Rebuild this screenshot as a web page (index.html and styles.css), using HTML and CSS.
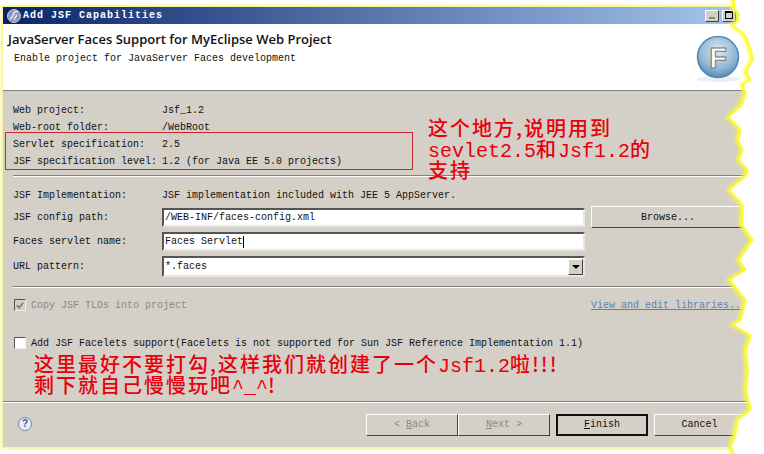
FILE: index.html
```html
<!DOCTYPE html>
<html lang="zh-CN">
<head>
    <meta charset="UTF-8">
    <title>Add JSF Capabilities</title>
    <link rel="stylesheet" href="styles.css">
</head>
<body>
    <div class="shot">
        <div class="window">
            <!-- Title bar -->
            <div class="titlebar">
                <svg class="app-icon" width="14" height="14" viewBox="0 0 14 14">
                    <circle cx="7" cy="7" r="6.5" fill="#8f97b8" stroke="#c3c8da"/>
                    <path d="M3 10C5 9 6 7 7 4C8 2 10 2 11 3M7 11C8 9 9 7 10 6" fill="none" stroke="#e8eaf4" stroke-width="1.4"/>
                </svg>
                <span class="title-text">Add JSF Capabilities</span>
                <span class="title-btn"><i class="min-mark"></i></span>
                <span class="title-btn"><i class="max-mark"></i></span>
            </div>

            <!-- Wizard header -->
            <div class="header">
                <div>
                    <h1>JavaServer Faces Support for MyEclipse Web Project</h1>
                    <p>Enable project for JavaServer Faces development</p>
                </div>
                <svg class="logo" width="48" height="50" viewBox="0 0 48 50">
                    <defs>
                        <radialGradient id="ball" cx="0.5" cy="0.35" r="0.7">
                            <stop offset="0" stop-color="#dce9f2"/>
                            <stop offset="0.65" stop-color="#8fb4d2"/>
                            <stop offset="1" stop-color="#3f7fae"/>
                        </radialGradient>
                    </defs>
                    <ellipse cx="24" cy="45" rx="22" ry="3" fill="#eceff4"/>
                    <circle cx="24" cy="23" r="20.5" fill="url(#ball)" stroke="#4f8ab5" stroke-width="1.5"/>
                    <text x="24" y="34" class="logo-f">F</text>
                </svg>
            </div>

            <!-- Project info -->
            <div class="content">
                <div class="info">
                    <span>Web project:</span><span>Jsf_1.2</span>
                    <span>Web-root folder:</span><span>/WebRoot</span>
                    <span>Servlet specification:</span><span>2.5</span>
                    <span>JSF specification level:</span><span>1.2 (for Java EE 5.0 projects)</span>
                </div>
                <hr class="sep sep-info">

                <div class="form">
                    <span class="impl-label">JSF Implementation:</span>
                    <span class="impl-value">JSF implementation included with JEE 5 AppServer.</span>

                    <span>JSF config path:</span>
                    <div class="field">/WEB-INF/faces-config.xml</div>
                    <div class="btn browse">Browse...</div>

                    <span>Faces servlet name:</span>
                    <div class="field">Faces Servlet<i class="caret"></i></div>
                    <span></span>

                    <span>URL pattern:</span>
                    <div class="field combo">*.faces<span class="arrow"><i></i></span></div>
                    <span></span>
                </div>
                <hr class="sep sep-form">

                <div class="tlds">
                    <span class="check disabled">
                        <svg width="11" height="11" viewBox="0 0 11 11"><path d="M2 5L4.5 8L9 2.5" fill="none" stroke="#808080" stroke-width="2"/></svg>
                    </span>
                    <span class="muted">Copy JSF TLDs into project</span>
                    <a class="link">View and edit libraries...</a>
                </div>

                <div class="facelets">
                    <span class="check"></span>
                    <span>Add JSF Facelets support(Facelets is not supported for Sun JSF Reference Implementation 1.1)</span>
                </div>
            </div>

            <!-- Wizard buttons -->
            <div class="footer">
                <span class="help">?</span>
                <div class="btn off"><span>&lt; <u>B</u>ack</span></div>
                <div class="btn off"><span><u>N</u>ext &gt;</span></div>
                <div class="btn default"><span><u>F</u>inish</span></div>
                <div class="btn">Cancel</div>
            </div>
        </div>

        <!-- Red notes drawn over the screenshot -->
        <div class="red-box"></div>
        <div class="note note-top">这个地方,说明用到<br><b>sevlet2.5</b>和<b>Jsf1.2</b>的<br>支持</div>
        <div class="note note-bottom">这里最好不要打勾,这样我们就创建了一个<b>Jsf1.2</b>啦!!!<br>剩下就自己慢慢玩吧<b>^_^</b>!</div>

        <!-- Torn right edge -->
        <svg class="torn" width="764" height="454" viewBox="0 0 764 454">
            <defs>
                <filter id="glow" x="-20%" y="-5%" width="140%" height="110%"><feGaussianBlur stdDeviation="1.5"/></filter>
            </defs>
            <path class="edge-glow" filter="url(#glow)" d="M733 0L733 8L738 14L737 22L732 25L740 31L745 36L750 50L752 60L745 72L750 80L742 85L745 93L741 105L728 117L740 130L737 140L742 150L738 160L747 170L745 176L738 182L729 190L742 205L741 225L752 240L738 260L745 270L729 280L745 300L740 320L733 325L750 335L745 350L747 370L745 390L750 410L737 420L735 432L730 447L733 454L764 454L764 0Z"/>
            <path class="edge-line" d="M735 0L735 8L740 14L739 22L734 25L742 31L747 36L752 50L754 60L747 72L752 80L744 85L747 93L743 105L730 117L742 130L739 140L744 150L740 160L749 170L747 176L740 182L731 190L744 205L743 225L754 240L740 260L747 270L731 280L747 300L742 320L735 325L752 335L747 350L749 370L747 390L752 410L739 420L737 432L732 447L735 454L764 454L764 0Z"/>
        </svg>
    </div>
</body>
</html>
```

FILE: styles.css
```css
html, body {
    margin: 0;
    background: #fff;
}

body {
    font-family: "Liberation Mono", "Noto Sans CJK SC", monospace;
    font-size: 10px;
    color: #111;
}

.shot {
    position: relative;
    width: 764px;
    height: 454px;
    overflow: hidden;
}

.window {
    display: flex;
    flex-direction: column;
    width: 750px;
    height: 440px;
    margin: 7px 0 0 3px;
    background: #d4d0c8;
    box-shadow: 0 0 2px 2px #f6f68c;
}

/* Title bar */
.titlebar {
    display: flex;
    align-items: center;
    height: 17px;
    padding-right: 17px;
    background: linear-gradient(to right, #0a246a, #a6caf0);
}

.app-icon {
    margin-left: 4px;
}

.title-text {
    flex: 1;
    margin-left: 2px;
    color: #fff;
    font-weight: bold;
    letter-spacing: 1px;
}

.title-btn {
    display: flex;
    align-items: flex-end;
    justify-content: center;
    box-sizing: border-box;
    width: 14px;
    height: 12px;
    margin-left: 3px;
    padding: 2px;
    background: #d4d0c8;
    border: 1px solid;
    border-color: #fff #404040 #404040 #fff;
}

.min-mark {
    width: 6px;
    height: 2px;
    background: #888;
}

.max-mark {
    box-sizing: border-box;
    width: 9px;
    height: 8px;
    border: 1px solid #000;
    border-top-width: 2px;
}

/* Wizard header */
.header {
    display: flex;
    justify-content: space-between;
    height: 66px;
    background: #fff;
    border-bottom: 1px solid #808080;
}

h1 {
    margin: 8px 0 0 5px;
    font-family: "Open Sans", sans-serif;
    font-size: 13px;
    line-height: 15px;
    font-weight: 600;
    letter-spacing: 0;
}

.header p {
    margin: 6px 0 0 11px;
    line-height: 12px;
}

.logo {
    margin: 10px 11px 0 0;
}

.logo-f {
    font-family: "Liberation Sans", sans-serif;
    font-size: 29px;
    font-weight: bold;
    text-anchor: middle;
    fill: #fff;
    stroke: #6d7378;
    stroke-width: 1;
}

/* Main content */
.content {
    flex: 1;
    padding: 11px 0 0 10px;
}

.info {
    display: grid;
    grid-template-columns: 149px 1fr;
    grid-auto-rows: 17px;
    align-items: center;
}

.sep {
    height: 0;
    margin: 0;
    border: 0;
    border-top: 1px solid #808080;
    border-bottom: 1px solid #fff;
}

.sep-info {
    margin-top: 5px;
}

.form {
    display: grid;
    grid-template-columns: 149px 423px 154px;
    grid-template-rows: 16px 28px 21px 28px;
    align-items: center;
    margin-top: 10px;
}

.impl-value {
    grid-column: 2 / 4;
}

.field {
    display: flex;
    align-items: center;
    box-sizing: border-box;
    height: 19px;
    padding-left: 1px;
    background: #fff;
    border: 2px solid;
    border-color: #555 #e8e6e0 #e8e6e0 #555;
}

.caret {
    width: 1px;
    height: 12px;
    background: #000;
}

.combo {
    position: relative;
    height: 21px;
}

.arrow {
    display: flex;
    align-items: center;
    justify-content: center;
    position: absolute;
    top: 1px;
    right: 0;
    box-sizing: border-box;
    width: 15px;
    height: 16px;
    background: #d4d0c8;
    border: 1px solid;
    border-color: #fff #404040 #404040 #fff;
}

.arrow i {
    border: 4px solid transparent;
    border-top: 4px solid #000;
    border-bottom: 0;
}

.btn {
    display: flex;
    align-items: center;
    justify-content: center;
    box-sizing: border-box;
    width: 91px;
    height: 22px;
    background: #d4d0c8;
    border: 1px solid;
    border-color: #fff #404040 #404040 #fff;
}

.browse {
    width: 154px;
    margin-left: 6px;
}

.sep-form {
    margin-top: 6px;
}

.tlds {
    display: flex;
    align-items: center;
    height: 14px;
    margin-top: 10px;
    padding-left: 1px;
}

.muted {
    margin-left: 5px;
    color: #8a8880;
}

.link {
    margin-left: 404px;
    color: #5d7fb8;
    text-decoration: underline;
}

.check {
    display: inline-flex;
    align-items: center;
    justify-content: center;
    box-sizing: border-box;
    width: 12px;
    height: 12px;
    background: #fff;
    border: 1px solid;
    border-color: #555 #eee #eee #555;
}

.check.disabled {
    background: #d4d0c8;
}

.facelets {
    display: flex;
    align-items: center;
    gap: 5px;
    height: 14px;
    margin-top: 24px;
    padding-left: 1px;
}

/* Wizard buttons */
.footer {
    position: relative;
    display: flex;
    align-items: center;
    height: 45px;
    padding-left: 363px;
    border-top: 1px solid #808080;
    box-shadow: inset 0 1px 0 #fff;
}

.footer .btn.off {
    width: 92px;
    color: #8a8880;
}

.footer .btn.default {
    width: 92px;
    margin: 0 6px;
    border: 2px solid #111;
}

.help {
    position: absolute;
    left: 15px;
    top: 15px;
    width: 14px;
    height: 14px;
    border-radius: 50%;
    background: #e8eef6;
    border: 1px solid #6f86a8;
    box-sizing: border-box;
    color: #3e5c8c;
    font: bold 10px/12px "Liberation Sans", sans-serif;
    text-align: center;
}

/* Red annotations */
.red-box {
    position: absolute;
    left: 5px;
    top: 132px;
    width: 408px;
    height: 38px;
    border: 1px solid #c8282c;
    box-sizing: border-box;
}

.note {
    position: absolute;
    color: #e8000c;
    font-family: "Noto Sans CJK SC", sans-serif;
    font-size: 20px;
    font-weight: 500;
    line-height: 21px;
    letter-spacing: 2px;
    white-space: nowrap;
}

.note b {
    font-family: "Liberation Mono", monospace;
    font-weight: normal;
    line-height: 0;
    letter-spacing: 0;
}

.note-top {
    left: 428px;
    top: 117px;
}

.note-bottom {
    left: 34px;
    top: 353px;
}

/* Torn edge */
.torn {
    position: absolute;
    left: 0;
    top: 0;
}

.edge-glow {
    fill: #fdfd50;
    stroke: #fbfb30;
    stroke-width: 4;
}

.edge-line {
    fill: #fff;
    stroke: none;
}
```
